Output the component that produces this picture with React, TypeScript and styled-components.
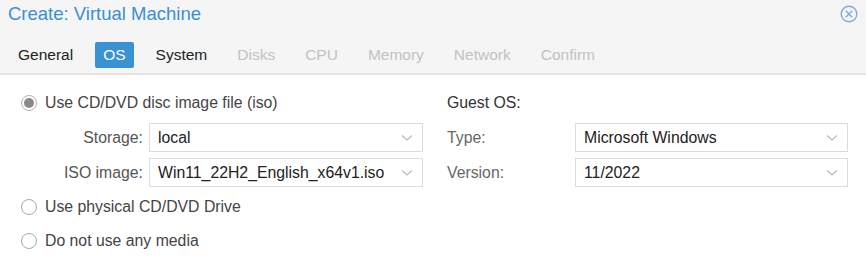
import React from "react";
import styled, { createGlobalStyle } from "styled-components";

const GlobalStyle = createGlobalStyle`
  html, body {
    margin: 0;
    padding: 0;
    background: #fff;
  }
  body {
    font-family: "Liberation Sans", Arial, sans-serif;
  }
`;

const tabs = [
  { label: "General", state: "done" },
  { label: "OS", state: "active" },
  { label: "System", state: "done" },
  { label: "Disks", state: "disabled" },
  { label: "CPU", state: "disabled" },
  { label: "Memory", state: "disabled" },
  { label: "Network", state: "disabled" },
  { label: "Confirm", state: "disabled" },
] as const;

type TabState = (typeof tabs)[number]["state"];

const Chevron = () => (
  <svg width="12" height="8" viewBox="0 0 12 8">
    <path d="M1 1.5 L6 6 L11 1.5" fill="none" stroke="#b9b9b9" strokeWidth="1.2" />
  </svg>
);

const CloseIcon = () => (
  <svg width="18" height="18" viewBox="0 0 18 18">
    <circle cx="9" cy="9" r="7.8" fill="none" stroke="#7eaed6" strokeWidth="1.4" />
    <path d="M5.8 5.8 L12.2 12.2 M12.2 5.8 L5.8 12.2" stroke="#7eaed6" strokeWidth="1.4" />
  </svg>
);

const Select = ({ value }: { value: string }) => (
  <SelectBox>
    <SelectValue>{value}</SelectValue>
    <Chevron />
  </SelectBox>
);

export default function App() {
  return (
    <>
      <GlobalStyle />
      <Window>
        <Header>
          <TitleRow>
            <Title>Create: Virtual Machine</Title>
            <CloseIcon />
          </TitleRow>
          <TabBar>
            {tabs.map((t) => (
              <Tab key={t.label} state={t.state}>
                {t.label}
              </Tab>
            ))}
          </TabBar>
        </Header>

        <Body>
          <Column>
            <RadioRow>
              <Radio checked />
              <RadioLabel>Use CD/DVD disc image file (iso)</RadioLabel>
            </RadioRow>
            <FieldRow>
              <IndentLabel>Storage:</IndentLabel>
              <Select value="local" />
            </FieldRow>
            <FieldRow>
              <IndentLabel>ISO image:</IndentLabel>
              <Select value="Win11_22H2_English_x64v1.iso" />
            </FieldRow>
            <RadioRow>
              <Radio />
              <RadioLabel>Use physical CD/DVD Drive</RadioLabel>
            </RadioRow>
            <RadioRow>
              <Radio />
              <RadioLabel>Do not use any media</RadioLabel>
            </RadioRow>
          </Column>

          <RightColumn>
            <SectionTitle>Guest OS:</SectionTitle>
            <FieldRow>
              <PlainLabel>Type:</PlainLabel>
              <Select value="Microsoft Windows" />
            </FieldRow>
            <FieldRow>
              <PlainLabel>Version:</PlainLabel>
              <Select value="11/2022" />
            </FieldRow>
          </RightColumn>
        </Body>
      </Window>
    </>
  );
}

const Window = styled.div`
  width: 866px;
  height: 266px;
  background: #fff;
  overflow: hidden;
`;

const Header = styled.div`
  background: #f5f5f5;
  border-bottom: 2px solid #e4e4e4;
  height: 75px;
  box-sizing: border-box;
`;

const TitleRow = styled.div`
  height: 28px;
  padding: 0 8px 0 8px;
  display: flex;
  align-items: center;
  justify-content: space-between;
`;

const Title = styled.div`
  font-size: 18.5px;
  color: #3a8fd2;
`;

const TabBar = styled.div`
  display: flex;
  align-items: center;
  gap: 14px;
  padding: 14px 0 0 10px;
`;

const Tab = styled.div<{ state: TabState }>`
  height: 26px;
  padding: 0 8px;
  display: flex;
  align-items: center;
  border-radius: 2px;
  font-size: 15.5px;
  background: ${({ state }) => (state === "active" ? "#3892d4" : "transparent")};
  color: ${({ state }) =>
    state === "active" ? "#fff" : state === "done" ? "#222" : "#c2c2c2"};
`;

const Body = styled.div`
  display: flex;
  padding: 14px 0 0 21px;
`;

const Column = styled.div`
  width: 402px;
  display: flex;
  flex-direction: column;
  gap: 6px;
`;

const RightColumn = styled(Column)`
  width: 401px;
  margin-left: 24px;
`;

const RadioRow = styled.div`
  height: 28px;
  display: flex;
  align-items: center;
  gap: 8px;
`;

const Radio = styled.span<{ checked?: boolean }>`
  width: 16px;
  height: 16px;
  box-sizing: border-box;
  border-radius: 50%;
  border: 1.5px solid ${({ checked }) => (checked ? "#b0b0b0" : "#a8a8a8")};
  background: #fff;
  display: flex;
  align-items: center;
  justify-content: center;

  &::after {
    content: "";
    display: ${({ checked }) => (checked ? "block" : "none")};
    width: 10px;
    height: 10px;
    border-radius: 50%;
    background: #8a8a8a;
  }
`;

const RadioLabel = styled.span`
  font-size: 15.8px;
  color: #444;
`;

const SectionTitle = styled.div`
  height: 28px;
  display: flex;
  align-items: center;
  font-size: 15.8px;
  color: #333;
`;

const FieldRow = styled.div`
  display: flex;
  align-items: center;
`;

const IndentLabel = styled.div`
  width: 122px;
  padding-right: 6px;
  text-align: right;
  font-size: 15.8px;
  color: #555;
`;

const PlainLabel = styled.div`
  width: 128px;
  font-size: 15.8px;
  color: #666;
`;

const SelectBox = styled.div`
  flex: 1;
  height: 29px;
  box-sizing: border-box;
  border: 1px solid #dcdcdc;
  background: #fff;
  display: flex;
  align-items: center;
  justify-content: space-between;
  padding: 0 9px 0 8px;
`;

const SelectValue = styled.span`
  font-size: 15.8px;
  color: #222;
`;
